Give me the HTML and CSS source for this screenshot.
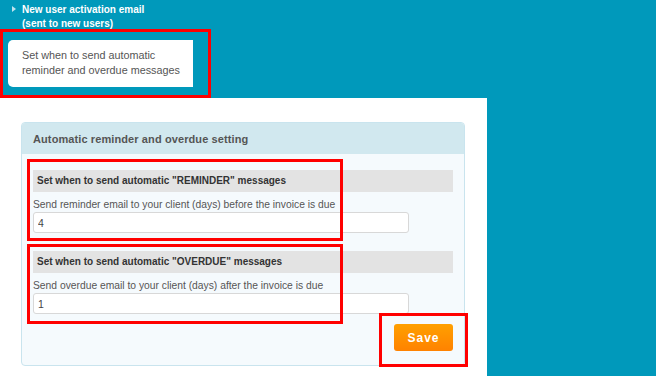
FILE: index.html
```html
<!DOCTYPE html>
<html lang="en">
<head>
  <meta charset="UTF-8" />
  <title>Automatic reminder and overdue setting</title>
  <link rel="stylesheet" href="styles.css">
</head>
<body>
  <div class="page">
    <ul class="side-nav">
      <li class="nav-link"><span class="arrow"></span>New user activation email<br>(sent to new users)</li>
      <li class="nav-tab">Set when to send automatic<br>reminder and overdue messages</li>
    </ul>

    <div class="panel">
      <div class="card">
        <div class="card-head">Automatic reminder and overdue setting</div>
        <div class="card-body">
          <div class="group">
            <div class="group-title">Set when to send automatic "REMINDER" messages</div>
            <label class="field-label" for="reminder">Send reminder email to your client (days) before the invoice is due</label>
            <input class="field" id="reminder" type="text" value="4">
          </div>
          <div class="group">
            <div class="group-title">Set when to send automatic "OVERDUE" messages</div>
            <label class="field-label" for="overdue">Send overdue email to your client (days) after the invoice is due</label>
            <input class="field" id="overdue" type="text" value="1">
          </div>
          <div class="actions">
            <button class="btn-save">Save</button>
          </div>
        </div>
      </div>
    </div>

    <!-- annotation boxes -->
    <div class="mark mark-tab"></div>
    <div class="mark mark-reminder"></div>
    <div class="mark mark-overdue"></div>
    <div class="mark mark-save"></div>
  </div>
</body>
</html>
```

FILE: styles.css
```css
body {
  margin: 0;
  background: #0099bb;
  font-family: 'Liberation Sans', Arial, sans-serif;
  font-size: 11px;
  color: #444;
}

.page {
  position: relative;
  width: 656px;
  height: 376px;
  overflow: hidden;
}

.side-nav {
  list-style: none;
  margin: 0;
  padding: 0;
}

.nav-link {
  position: relative;
  padding: 3px 0 0 22px;
  height: 33px;
  color: #fff;
  font-weight: bold;
  font-size: 10px;
  line-height: 14px;
}

.arrow {
  position: absolute;
  left: 12px;
  top: 6px;
  border-left: 4px solid #bfe3ee;
  border-top: 3px solid transparent;
  border-bottom: 3px solid transparent;
}

.nav-tab {
  margin: 4px 0 0 8px;
  width: 171px;
  height: 33px;
  padding: 8px 0 6px 14px;
  background: #fff;
  border-radius: 5px 0 0 5px;
  color: #555;
  font-size: 10.8px;
  line-height: 15px;
}

.panel {
  margin-top: 11px;
  width: 487px;
  height: 278px;
  background: #fff;
  padding: 24px 0 0 21px;
  box-sizing: border-box;
}

.card {
  width: 444px;
  height: 244px;
  box-sizing: border-box;
  border: 1px solid #c9e4ee;
  border-radius: 4px;
  background: #f5fafd;
}

.card-head {
  height: 31px;
  line-height: 33px;
  padding-left: 11px;
  background: #d1e8ef;
  color: #555;
  font-weight: bold;
  font-size: 11px;
  letter-spacing: 0.1px;
  border-radius: 3px 3px 0 0;
}

.card-body {
  padding: 16px 11px 0 11px;
}

.group + .group {
  margin-top: 18px;
}

.group-title {
  height: 22px;
  line-height: 22px;
  padding-left: 4px;
  background: #e3e3e3;
  color: #333;
  font-weight: bold;
  font-size: 10px;
}

.field-label {
  display: block;
  margin-top: 6px;
  height: 14px;
  line-height: 14px;
  font-size: 10.3px;
  color: #555;
}

.field {
  display: block;
  width: 376px;
  height: 21px;
  box-sizing: border-box;
  border: 1px solid #d8d8d8;
  border-radius: 3px;
  background: #fff;
  padding: 0 4px;
  font-family: inherit;
  font-size: 10.5px;
  color: #444;
}

.actions {
  display: flex;
  justify-content: flex-end;
  margin-top: 10px;
}

.btn-save {
  width: 59px;
  height: 27px;
  border: none;
  border-radius: 3px;
  background: linear-gradient(#ffa000, #ff8200);
  color: #fff;
  font-family: inherit;
  font-weight: bold;
  font-size: 12px;
  letter-spacing: 1px;
}

.mark {
  position: absolute;
  border: 3px solid #ff0000;
  box-sizing: border-box;
}

.mark-tab { left: 0; top: 29px; width: 211px; height: 69px; }
.mark-reminder { left: 27px; top: 159px; width: 316px; height: 82px; }
.mark-overdue { left: 27px; top: 244px; width: 316px; height: 80px; }
.mark-save { left: 379px; top: 313px; width: 89px; height: 54px; }
```
